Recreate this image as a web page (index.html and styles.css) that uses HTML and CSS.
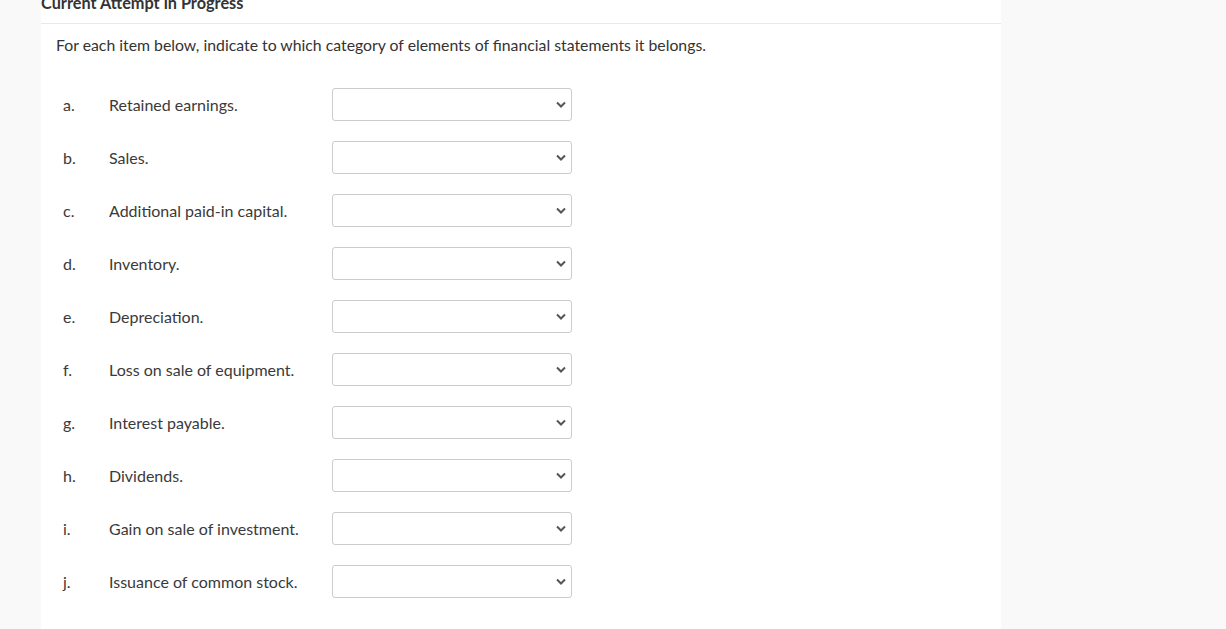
FILE: index.html
```html
<!DOCTYPE html>
<html lang="en">
<head>
    <meta charset="UTF-8">
    <title>Current Attempt in Progress</title>
    <link rel="stylesheet" href="styles.css">
</head>
<body>

    <div class="panel">
        <h2 class="attempt-title">Current Attempt in Progress</h2>

        <div class="question">
            <p class="prompt">For each item below, indicate to which category of elements of financial statements it belongs.</p>

            <div class="items">
                <div class="item">
                    <span class="letter">a.</span>
                    <span class="text">Retained earnings.</span>
                    <select class="answer"><option></option></select>
                </div>
                <div class="item">
                    <span class="letter">b.</span>
                    <span class="text">Sales.</span>
                    <select class="answer"><option></option></select>
                </div>
                <div class="item">
                    <span class="letter">c.</span>
                    <span class="text">Additional paid-in capital.</span>
                    <select class="answer"><option></option></select>
                </div>
                <div class="item">
                    <span class="letter">d.</span>
                    <span class="text">Inventory.</span>
                    <select class="answer"><option></option></select>
                </div>
                <div class="item">
                    <span class="letter">e.</span>
                    <span class="text">Depreciation.</span>
                    <select class="answer"><option></option></select>
                </div>
                <div class="item">
                    <span class="letter">f.</span>
                    <span class="text">Loss on sale of equipment.</span>
                    <select class="answer"><option></option></select>
                </div>
                <div class="item">
                    <span class="letter">g.</span>
                    <span class="text">Interest payable.</span>
                    <select class="answer"><option></option></select>
                </div>
                <div class="item">
                    <span class="letter">h.</span>
                    <span class="text">Dividends.</span>
                    <select class="answer"><option></option></select>
                </div>
                <div class="item">
                    <span class="letter">i.</span>
                    <span class="text">Gain on sale of investment.</span>
                    <select class="answer"><option></option></select>
                </div>
                <div class="item">
                    <span class="letter">j.</span>
                    <span class="text">Issuance of common stock.</span>
                    <select class="answer"><option></option></select>
                </div>
            </div>
        </div>
    </div>

</body>
</html>
```

FILE: styles.css
```css
body {
    margin: 0;
    padding: 0;
    background-color: #f9f9f9;
    font-family: Lato, "Open Sans", sans-serif;
    color: #333;
    overflow: hidden;
}

.panel {
    width: 960px;
    margin-left: 41px;
    min-height: calc(100vh + 7px);
    background-color: #fff;
}

.attempt-title {
    margin: -7px 0 0 0;
    height: 31px;
    box-sizing: border-box;
    font-size: 16.3px;
    line-height: 20px;
    font-weight: bold;
    color: #333;
    border-bottom: 1px solid #e8e8e8;
}

.question {
    padding: 0 15px;
}

.prompt {
    margin: 11px 0 0 0;
    font-size: 15.8px;
    line-height: 20px;
}

.items {
    margin-top: 33px;
}

.item {
    display: grid;
    grid-template-columns: 46px 223px 240px;
    align-items: center;
    height: 33px;
    margin-bottom: 20px;
    padding-left: 7px;
    font-size: 16px;
    color: #3a3a3a;
}

.answer {
    width: 240px;
    height: 33px;
    border: 1px solid #ccc;
    border-radius: 3px;
    background-color: #fff;
    appearance: none;
    -webkit-appearance: none;
    background-image: url("data:image/svg+xml,%3Csvg xmlns='http://www.w3.org/2000/svg' width='10' height='7' viewBox='0 0 10 7'%3E%3Cpath d='M1 1.5l4 4 4-4' fill='none' stroke='%23555' stroke-width='2'/%3E%3C/svg%3E");
    background-repeat: no-repeat;
    background-position: right 5px center;
}
```
